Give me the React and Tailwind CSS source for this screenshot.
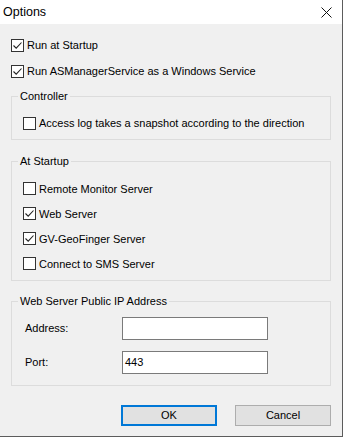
import React from "react";

const Check = ({ checked }) => (
  <span className="w-[13px] h-[13px] border border-[#333333] bg-white flex items-center justify-center shrink-0">
    {checked && (
      <svg width="11" height="11" viewBox="0 0 11 11">
        <path d="M1.5 5.5 L4.2 8.2 L9.5 2.5" fill="none" stroke="#222" strokeWidth="1.1" />
      </svg>
    )}
  </span>
);

const Row = ({ checked, label, h = "h-[26px]" }) => (
  <div className={`flex items-center gap-[3px] ${h}`}>
    <Check checked={checked} />
    <span className="leading-[14px]">{label}</span>
  </div>
);

const Group = ({ title, className, children }) => (
  <fieldset className={`border border-[#dcdcdc] ${className}`}>
    <legend className="ml-[6px] px-[2px] leading-[14px]">{title}</legend>
    {children}
  </fieldset>
);

export default function App() {
  return (
    <div className="w-[344px] h-[441px] bg-white text-[11px] text-black" style={{ fontFamily: '"Liberation Sans", Arial, sans-serif' }}>
      <div className="w-[343px] h-[437px] flex flex-col border-r border-b border-[#5c5c5c]">
        {/* Title bar */}
        <div className="h-[24px] bg-white flex items-center justify-between pl-[3px] pr-[10px] shrink-0">
          <span className="text-[12.5px]">Options</span>
          <svg width="11" height="11" viewBox="0 0 11 11">
            <path d="M0.5 0.5 L10.5 10.5 M10.5 0.5 L0.5 10.5" stroke="#111" strokeWidth="1" />
          </svg>
        </div>

        <div className="flex-1 bg-[#f0f0f0] px-[11px] pt-[8px] flex flex-col">
          <Row checked label="Run at Startup" />
          <Row checked label="Run ASManagerService as a Windows Service" />

          <Group title="Controller" className="mt-[5px] pb-[3px]">
            <div className="mt-[7px] pl-[11px]">
              <Row label="Access log takes a snapshot according to the direction" />
            </div>
          </Group>

          <Group title="At Startup" className="mt-[14px] pb-[4px]">
            <div className="mt-[8px] pl-[11px]">
              <Row h="h-[25px]" label="Remote Monitor Server" />
              <Row h="h-[25px]" checked label="Web Server" />
              <Row h="h-[25px]" checked label="GV-GeoFinger Server" />
              <Row h="h-[25px]" label="Connect to SMS Server" />
            </div>
          </Group>

          <Group title="Web Server Public IP Address" className="mt-[13px] pb-[11px]">
            <div className="mt-[9px] pl-[13px] flex flex-col gap-[11px]">
              <div className="flex items-center h-[23px]">
                <span className="w-[97px]">Address:</span>
                <div className="w-[146px] h-[23px] bg-white border border-[#7a7a7a]" />
              </div>
              <div className="flex items-center h-[23px]">
                <span className="w-[97px]">Port:</span>
                <div className="w-[146px] h-[23px] bg-white border border-[#7a7a7a] flex items-center pl-[2px]">443</div>
              </div>
            </div>
          </Group>

          <div className="mt-[19px] flex justify-end gap-[18px]">
            <button className="w-[96px] h-[21px] bg-[#e1e1e1] border-2 border-[#0078d7] flex items-center justify-center">OK</button>
            <button className="w-[96px] h-[21px] bg-[#e1e1e1] border border-[#adadad] flex items-center justify-center">Cancel</button>
          </div>
        </div>
      </div>
    </div>
  );
}
